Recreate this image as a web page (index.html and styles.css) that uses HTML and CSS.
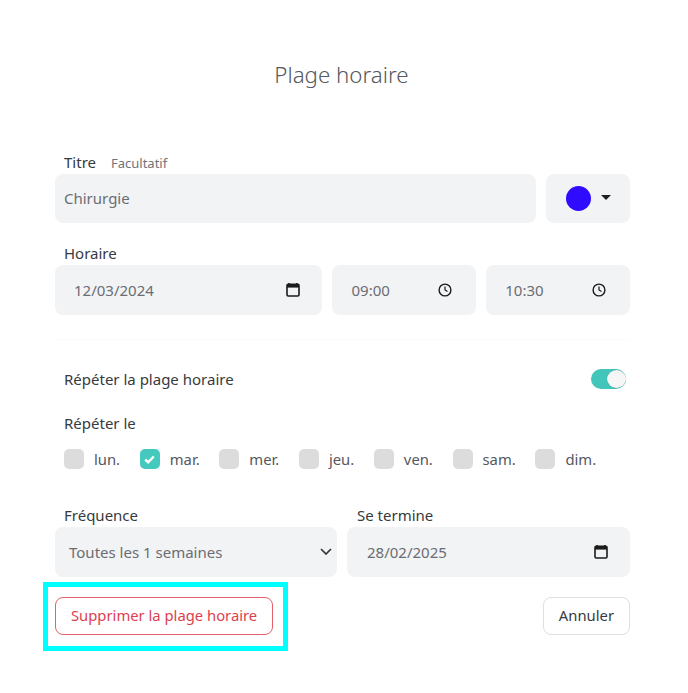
FILE: index.html
```html
<!DOCTYPE html>
<html lang="fr">
<head>
<meta charset="utf-8">
<title>Plage horaire</title>
<link rel="stylesheet" href="styles.css">
</head>
<body>
<main class="dialog">
  <h1 class="title">Plage horaire</h1>

  <div class="label-row first"><span class="label">Titre</span><span class="hint">Facultatif</span></div>
  <div class="row">
    <div class="field grow pad-title">Chirurgie</div>
    <div class="field color-field">
      <span class="dot"></span>
      <svg class="caret" width="10" height="5" viewBox="0 0 10 5"><path d="M0 0h10L5 5z"/></svg>
    </div>
  </div>

  <div class="label-row second"><span class="label">Horaire</span></div>
  <div class="row">
    <div class="field date-wide">
      <span>12/03/2024</span>
      <svg class="icon" width="14" height="15" viewBox="0 0 14 15"><path d="M3 1v2M11 1v2" stroke="#1b1b1b" stroke-width="1.6" fill="none"/><rect x="1" y="2.4" width="12" height="11.6" rx="1.2" fill="none" stroke="#1b1b1b" stroke-width="1.6"/><path d="M1 3h12v2.6H1z" fill="#1b1b1b"/></svg>
    </div>
    <div class="field time">
      <span>09:00</span>
      <svg class="icon" width="14" height="14" viewBox="0 0 14 14"><circle cx="7" cy="7" r="5.9" fill="none" stroke="#1b1b1b" stroke-width="1.4"/><path d="M7 3.6V7l2.5 1.6" fill="none" stroke="#1b1b1b" stroke-width="1.2"/></svg>
    </div>
    <div class="field time">
      <span>10:30</span>
      <svg class="icon" width="14" height="14" viewBox="0 0 14 14"><circle cx="7" cy="7" r="5.9" fill="none" stroke="#1b1b1b" stroke-width="1.4"/><path d="M7 3.6V7l2.5 1.6" fill="none" stroke="#1b1b1b" stroke-width="1.2"/></svg>
    </div>
  </div>

  <div class="repeat">
    <div class="repeat-head">
      <span class="label">Répéter la plage horaire</span>
      <span class="toggle"><span class="knob"></span></span>
    </div>
    <div class="label repeat-on">Répéter le</div>
    <div class="days">
      <label class="day"><span class="box"></span>lun.</label>
      <label class="day"><span class="box on"><svg width="11" height="9" viewBox="0 0 11 9"><path d="M1.2 4.5l3 2.8 5.6-5.8" fill="none" stroke="#fff" stroke-width="2.4"/></svg></span>mar.</label>
      <label class="day"><span class="box"></span>mer.</label>
      <label class="day"><span class="box"></span>jeu.</label>
      <label class="day"><span class="box"></span>ven.</label>
      <label class="day"><span class="box"></span>sam.</label>
      <label class="day"><span class="box"></span>dim.</label>
    </div>
  </div>

  <div class="row split">
    <div class="col">
      <div class="label col-label">Fréquence</div>
      <div class="field select">
        <span>Toutes les 1 semaines</span>
        <svg class="chev" width="12" height="7" viewBox="0 0 12 7"><path d="M1 1l5 5 5-5" fill="none" stroke="#33373d" stroke-width="1.7"/></svg>
      </div>
    </div>
    <div class="col">
      <div class="label col-label">Se termine</div>
      <div class="field date-end">
        <span>28/02/2025</span>
        <svg class="icon" width="14" height="15" viewBox="0 0 14 15"><path d="M3 1v2M11 1v2" stroke="#1b1b1b" stroke-width="1.6" fill="none"/><rect x="1" y="2.4" width="12" height="11.6" rx="1.2" fill="none" stroke="#1b1b1b" stroke-width="1.6"/><path d="M1 3h12v2.6H1z" fill="#1b1b1b"/></svg>
      </div>
    </div>
  </div>

  <div class="actions">
    <span class="danger-wrap">
      <button class="btn danger" type="button">Supprimer la plage horaire</button>
      <span class="highlight"></span>
    </span>
    <button class="btn" type="button">Annuler</button>
  </div>
</main>
</body>
</html>
```

FILE: styles.css
```css
* { box-sizing: border-box; }
html, body { margin: 0; background: #fff; }
body { font-family: "Noto Sans", sans-serif; color: #373a40; font-size: 15px; }
.dialog { width: 688px; height: 693px; padding: 0 58px 0 55px; overflow: hidden; }
.title { margin: 0; padding: 60px 2px 0 0; height: 90px; text-align: center; font-size: 22.3px; line-height: 30px; font-weight: 300; color: #55585e; }
.label-row { display: flex; align-items: baseline; gap: 15px; height: 20px; padding-left: 9px; }
.label-row.first { margin-top: 62px; margin-bottom: 2px; }
.label-row.second { margin-top: 20px; margin-bottom: 2px; }
.label { font-size: 15px; line-height: 20px; color: #373a40; }
.hint { font-size: 13px; color: #6f737a; }
.row { display: flex; gap: 10px; }
.field { height: 50px; background: #f2f3f5; border-radius: 8px; display: flex; align-items: center; color: #6a6d73; font-size: 15px; padding-bottom: 1px; }
.grow { flex: 1; }
.pad-title { padding-left: 9px; height: 49px; }
.color-field { width: 84px; height: 49px; padding-left: 20px; gap: 10px; }
.dot { width: 25px; height: 25px; border-radius: 50%; background: #2f0bff; }
.caret { fill: #1f1f1f; margin-top: -1px; }
.date-wide { width: 268px; padding: 0 22px 1px 19px; justify-content: space-between; }
.time { width: 144px; padding: 0 24px 1px 19px; justify-content: space-between; }
.repeat { margin-top: 24px; border-top: 1px solid #fbfbfb; padding-top: 29px; }
.repeat-head { display: flex; justify-content: space-between; align-items: center; padding: 0 4px 0 9px; height: 20px; }
.toggle { width: 35px; height: 20px; border-radius: 10px; background: #42c5bb; position: relative; display: block; }
.knob { position: absolute; right: 0; top: 1px; width: 19px; height: 18px; border-radius: 50%; background: #f6f6f6; box-shadow: 0 0 1px rgba(0,0,0,.3); }
.repeat-on { margin-top: 24px; padding-left: 9px; }
.days { display: flex; gap: 19.7px; margin-top: 16px; padding-left: 9px; }
.day { display: flex; align-items: center; gap: 10px; color: #55585e; font-size: 14.8px; line-height: 20px; }
.box { width: 20px; height: 20px; border-radius: 5px; background: #dcdcdc; display: flex; align-items: center; justify-content: center; }
.box.on { background: #45c9bf; }
.split { margin-top: 36px; }
.col-label { padding-left: 9px; margin-bottom: 2px; }
.select { width: 282px; padding: 0 5px 1px 14px; justify-content: space-between; }
.date-end { width: 283px; padding: 0 22px 1px 20px; justify-content: space-between; }
.col:last-child .col-label { padding-left: 10px; }
.actions { display: flex; justify-content: space-between; margin-top: 20px; }
.danger-wrap { position: relative; display: block; }
.btn { height: 38px; padding: 0 15px 2px; border: 1px solid #dfe0e2; border-radius: 8px; background: #fff; font: 14.8px "Noto Sans", sans-serif; color: #373a40; }
.danger { border-color: #e8606e; color: #dc3f50; }
.highlight { position: absolute; left: -12px; right: -15px; top: -15px; bottom: -16px; border: 5px solid #00ffff; }
```
